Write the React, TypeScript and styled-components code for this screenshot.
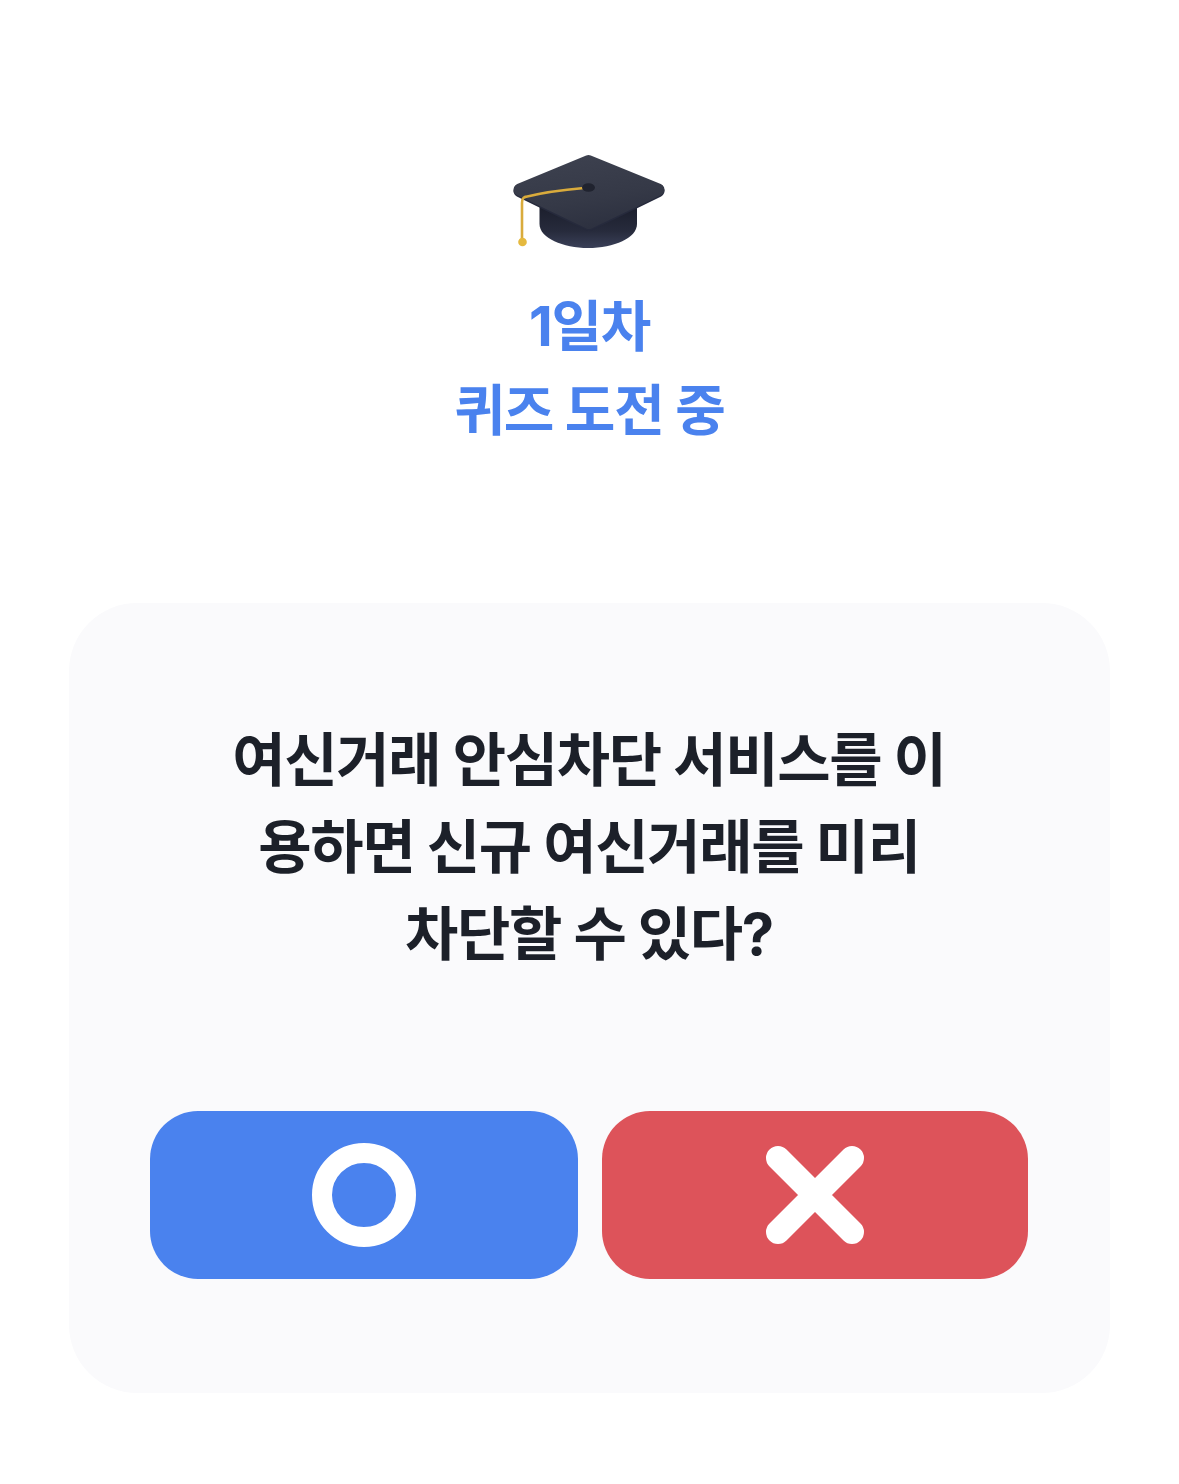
import React from "react";
import styled, { createGlobalStyle } from "styled-components";

const GlobalStyle = createGlobalStyle`
	html, body {
		margin: 0;
		padding: 0;
		background: #ffffff;
	}
	body {
		font-family: "Inter", "Noto Sans CJK KR", sans-serif;
	}
`;

function CapIcon() {
	return (
		<svg width="200" height="120" viewBox="0 0 200 120" aria-hidden="true">
			<defs>
				<linearGradient id="capBody" x1="0" y1="0" x2="0" y2="1">
					<stop offset="0" stopColor="#1b1e2c" />
					<stop offset="0.6" stopColor="#272b3c" />
					<stop offset="1" stopColor="#3a4058" />
				</linearGradient>
				<linearGradient id="capTop" x1="0.3" y1="0" x2="0.7" y2="1">
					<stop offset="0" stopColor="#3c404e" />
					<stop offset="0.6" stopColor="#353947" />
					<stop offset="1" stopColor="#2d3140" />
				</linearGradient>
			</defs>
			<path d="M50.500 66 L50.500 84 C50.500 98 74 108 99 108 C125 108 148 98 148 84 L148 66 Z" fill="url(#capBody)" />
			<path
				d="M99.500 22 C120 31 150 44 169.500 51 L100 85 L30.500 51 Z"
				fill="#262a3c"
				stroke="#262a3c"
				strokeWidth="12"
				strokeLinejoin="round"
			/>
			<path
				d="M99.500 21 L169.500 49.500 L100 83 L30.500 49.500 Z"
				fill="url(#capTop)"
				stroke="url(#capTop)"
				strokeWidth="12"
				strokeLinejoin="round"
			/>
			<path d="M36 57 Q33 58 33 63 L33 102" fill="none" stroke="#d9ab3c" strokeWidth="2.600" strokeLinecap="round" />
			<path d="M36 57 Q60 51 95 48" fill="none" stroke="#d9ab3c" strokeWidth="2.400" strokeLinecap="round" />
			<circle cx="33.500" cy="102" r="4.300" fill="#e5b93f" />
			<ellipse cx="99.500" cy="47.500" rx="6.500" ry="4.300" fill="#20232f" />
		</svg>
	);
}

function CircleIcon() {
	return (
		<svg width="104" height="104" viewBox="0 0 104 104" aria-hidden="true">
			<circle cx="52" cy="52" r="42" fill="none" stroke="#ffffff" strokeWidth="20" />
		</svg>
	);
}

function CrossIcon() {
	return (
		<svg width="100" height="100" viewBox="0 0 100 100" aria-hidden="true">
			<path d="M13 13 L87 87 M87 13 L13 87" fill="none" stroke="#ffffff" strokeWidth="24" strokeLinecap="round" />
		</svg>
	);
}

export default function App() {
	return (
		<Page>
			<GlobalStyle />
			<Header>
				<CapIcon />
				<Title>
					1일차
					<br />
					퀴즈 도전 중
				</Title>
			</Header>
			<Card>
				<Question>
					여신거래 안심차단 서비스를 이
					<br />
					용하면 신규 여신거래를 미리
					<br />
					차단할 수 있다?
				</Question>
				<Answers>
					<AnswerButton $color="#4a82ee">
						<CircleIcon />
					</AnswerButton>
					<AnswerButton $color="#dd535a">
						<CrossIcon />
					</AnswerButton>
				</Answers>
			</Card>
		</Page>
	);
}

const Page = styled.div`
	width: 1179px;
	height: 1484px;
	box-sizing: border-box;
	padding-top: 140px;
	display: flex;
	flex-direction: column;
	align-items: center;
	background: #ffffff;
`;

const Header = styled.div`
	display: flex;
	flex-direction: column;
	align-items: center;
	gap: 24px;
`;

const Title = styled.h1`
	margin: 0;
	font-size: 55px;
	line-height: 84px;
	font-weight: 700;
	letter-spacing: -1.300px;
	text-align: center;
	color: #4a82ee;
`;

const Card = styled.section`
	margin-top: 151px;
	width: 1041px;
	height: 790px;
	box-sizing: border-box;
	padding: 114px 82px 114px 81px;
	display: flex;
	flex-direction: column;
	justify-content: space-between;
	border-radius: 68px;
	background: #fafafc;
`;

const Question = styled.p`
	margin: 0;
	font-size: 58px;
	line-height: 87px;
	font-weight: 700;
	letter-spacing: -1.350px;
	text-align: center;
	color: #1c2029;
`;

const Answers = styled.div`
	display: grid;
	grid-template-columns: 428px 426px;
	gap: 24px;
`;

const AnswerButton = styled.button<{ $color: string }>`
	height: 168px;
	padding: 0;
	border: 0;
	border-radius: 48px;
	display: flex;
	align-items: center;
	justify-content: center;
	background: ${(p) => p.$color};
`;
